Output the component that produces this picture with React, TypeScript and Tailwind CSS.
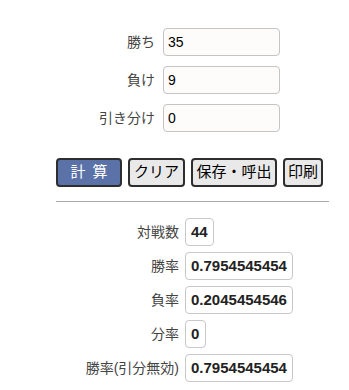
import { useState } from "react";

const font = { fontFamily: '"Liberation Sans", "Noto Sans CJK JP", sans-serif' };

export default function App() {
  const [win, setWin] = useState("35");
  const [lose, setLose] = useState("9");
  const [draw, setDraw] = useState("0");

  // values as shown after the last calculation
  const results = [
    { label: "対戦数", value: "44" },
    { label: "勝率", value: "0.7954545454" },
    { label: "負率", value: "0.2045454546" },
    { label: "分率", value: "0" },
    { label: "勝率(引分無効)", value: "0.7954545454" },
  ];

  const inputs = [
    { label: "勝ち", value: win, set: setWin },
    { label: "負け", value: lose, set: setLose },
    { label: "引き分け", value: draw, set: setDraw },
  ];

  return (
    <div className="min-h-screen bg-white text-[#333] pl-[56px] pr-[20px] pt-[28px]" style={font}>
      <div className="flex flex-col gap-[10px]">
        {inputs.map((r) => (
          <div key={r.label} className="flex items-center gap-[8px]">
            <span className="w-[99px] text-right text-[14px] text-[#444]">{r.label}</span>
            <input
              value={r.value}
              onChange={(e) => r.set(e.target.value)}
              className="w-[117px] h-[28px] rounded-[4px] border border-[#c4c4c4] bg-[#fdfcfb] px-[4px] text-[14px] text-black outline-none"
            />
          </div>
        ))}
      </div>

      <div className="flex gap-[6px] mt-[26px]">
        <button className="w-[66px] h-[29px] rounded-[4px] border-2 border-[#2e2e2e] bg-[#5a72a8] text-white text-[15px] tracking-[7px] pl-[7px]">
          計算
        </button>
        <button className="w-[57px] h-[29px] rounded-[4px] border-2 border-[#2e2e2e] bg-[#e9e9e9] text-black text-[15px]">
          クリア
        </button>
        <button className="w-[86px] h-[29px] rounded-[4px] border-2 border-[#2e2e2e] bg-[#e9e9e9] text-black text-[15px]">
          保存・呼出
        </button>
        <button className="w-[40px] h-[29px] rounded-[4px] border-2 border-[#2e2e2e] bg-[#e9e9e9] text-black text-[15px]">
          印刷
        </button>
      </div>

      <div className="mt-[14px] w-[273px] h-px bg-[#aaa]" />

      <div className="flex flex-col gap-[6px] mt-[16px]">
        {results.map((r) => (
          <div key={r.label} className="flex items-center gap-[6px]">
            <span className="w-[123px] text-right text-[14px] text-[#444]">{r.label}</span>
            <span className="min-w-[21px] h-[28px] flex items-center rounded-[4px] border border-[#c8c8c8] px-[5px] text-[15px] font-bold text-[#222]">
              {r.value}
            </span>
          </div>
        ))}
      </div>
    </div>
  );
}
